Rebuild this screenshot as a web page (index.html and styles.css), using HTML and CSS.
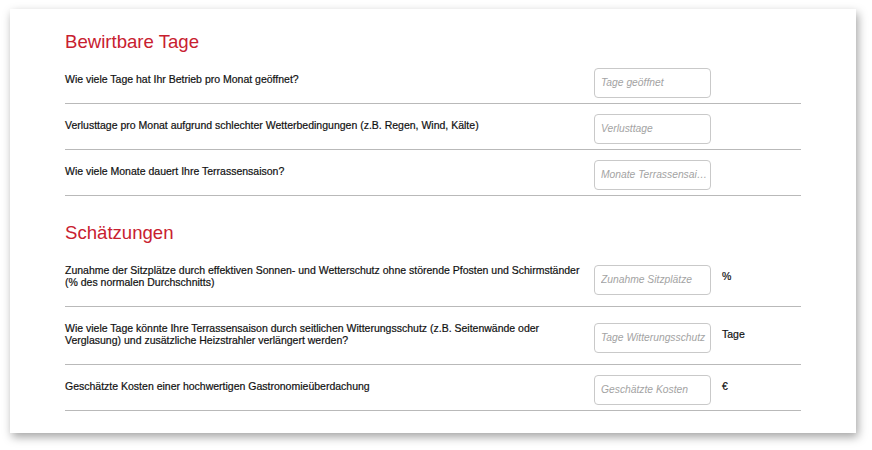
FILE: index.html
```html
<!DOCTYPE html>
<html lang="de">
<head>
<meta charset="utf-8">
<title>Terrassen-Rechner</title>
<link rel="stylesheet" href="styles.css">
</head>
<body>
<div class="card">
  <h2 class="section-title">Bewirtbare Tage</h2>
  <div class="row">
    <label class="question">Wie viele Tage hat Ihr Betrieb pro Monat geöffnet?</label>
    <input class="field" type="text" placeholder="Tage geöffnet">
    <span class="unit"></span>
  </div>
  <div class="row">
    <label class="question">Verlusttage pro Monat aufgrund schlechter Wetterbedingungen (z.B. Regen, Wind, Kälte)</label>
    <input class="field" type="text" placeholder="Verlusttage">
    <span class="unit"></span>
  </div>
  <div class="row">
    <label class="question">Wie viele Monate dauert Ihre Terrassensaison?</label>
    <input class="field" type="text" placeholder="Monate Terrassensaison">
    <span class="unit"></span>
  </div>

  <h2 class="section-title second">Schätzungen</h2>
  <div class="row">
    <label class="question">Zunahme der Sitzplätze durch effektiven Sonnen- und Wetterschutz ohne störende Pfosten und Schirmständer (% des normalen Durchschnitts)</label>
    <input class="field" type="text" placeholder="Zunahme Sitzplätze">
    <span class="unit">%</span>
  </div>
  <div class="row">
    <label class="question">Wie viele Tage könnte Ihre Terrassensaison durch seitlichen Witterungsschutz (z.B. Seitenwände oder Verglasung) und zusätzliche Heizstrahler verlängert werden?</label>
    <input class="field" type="text" placeholder="Tage Witterungsschutz">
    <span class="unit">Tage</span>
  </div>
  <div class="row">
    <label class="question">Geschätzte Kosten einer hochwertigen Gastronomieüberdachung</label>
    <input class="field" type="text" placeholder="Geschätzte Kosten">
    <span class="unit">€</span>
  </div>
</div>
</body>
</html>
```

FILE: styles.css
```css
html, body {
  margin: 0;
  padding: 0;
  background: #ffffff;
}

body {
  min-height: 450px;
  font-family: "Liberation Sans", Arial, Helvetica, sans-serif;
  color: #111111;
}

.card {
  box-sizing: border-box;
  width: 846px;
  margin: 9px 0 0 10px;
  padding: 21px 55px 22px 55px;
  background: #ffffff;
  box-shadow: 2px 4px 9px rgba(0, 0, 0, 0.36);
}

.section-title {
  margin: 0 0 4px 0;
  font-size: 18.6px;
  line-height: 24px;
  font-weight: normal;
  color: #c8202f;
}

.section-title.second {
  margin-top: 25px;
}

.row {
  display: flex;
  align-items: center;
  border-bottom: 1px solid #b9b9b9;
}

.question {
  flex: 0 0 520px;
  margin-right: 9px;
  padding: 15px 0 18px 0;
  font-size: 10.5px;
  line-height: 12px;
  color: #111111;
  -webkit-text-stroke: 0.2px #111111;
}

.field {
  box-sizing: border-box;
  flex: 0 0 117px;
  width: 117px;
  height: 30px;
  margin-top: 4px;
  padding: 0 2px 0 6px;
  border: 1px solid #c9c9c9;
  border-radius: 4px;
  background: #ffffff;
  font-family: "Liberation Sans", Arial, Helvetica, sans-serif;
  font-size: 10.3px;
  font-style: italic;
  color: #333333;
  text-overflow: ellipsis;
  outline: none;
}

.field::placeholder {
  color: #a3a3a3;
  font-style: italic;
}

.unit {
  flex: 1 1 auto;
  margin-bottom: 3px;
  padding-left: 11px;
  font-size: 10.5px;
  line-height: 12px;
  color: #111111;
  -webkit-text-stroke: 0.2px #111111;
}
```
